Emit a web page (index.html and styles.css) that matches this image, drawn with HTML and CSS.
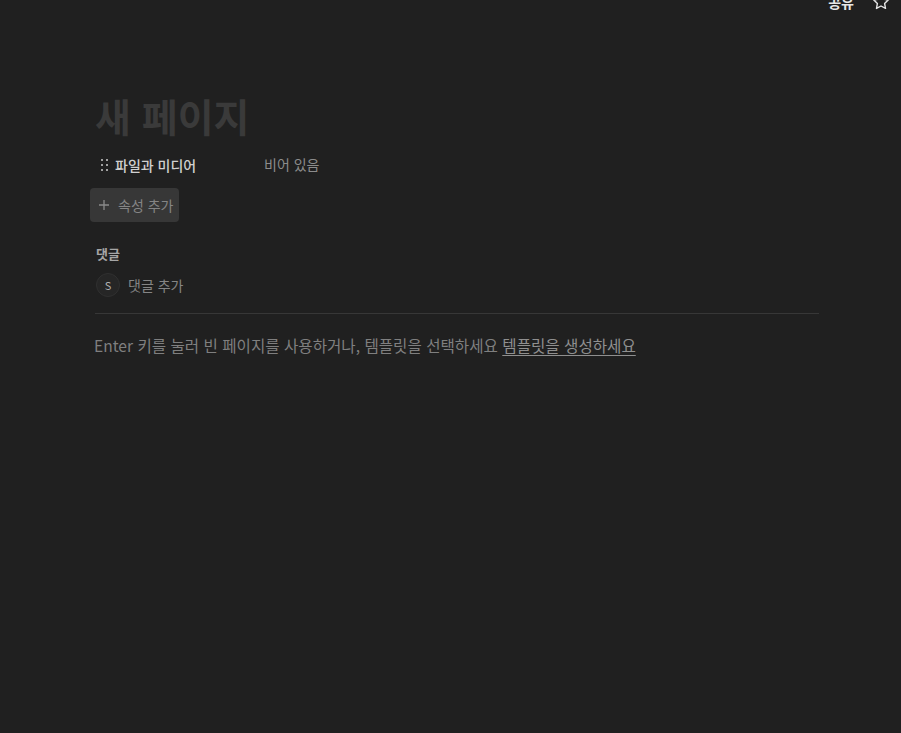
FILE: index.html
```html
<!DOCTYPE html>
<html lang="ko">
	<head>
		<meta charset="UTF-8" />
		<meta name="viewport" content="width=device-width, initial-scale=1.0" />
		<title>새 페이지</title>
		<link rel="stylesheet" href="styles.css">
	</head>
	<body>
		<div class="topbar">
			<span class="share">공유</span>
			<svg class="star" width="18" height="18" viewBox="0 0 18 18">
				<path d="M9 1.6l2.2 4.6 5 .7-3.6 3.5.9 5-4.5-2.4-4.5 2.4.9-5L1.8 6.9l5-.7z" fill="none" stroke="#e6e6e6" stroke-width="1.4" stroke-linejoin="round" />
			</svg>
		</div>

		<div class="page">
			<h1 class="title">새 페이지</h1>

			<div class="property-row">
				<div class="property-name">
					<span class="handle"><i></i><i></i><i></i><i></i><i></i><i></i></span>
					파일과 미디어
				</div>
				<div class="property-value">비어 있음</div>
			</div>

			<button class="add-property">
				<svg class="plus" width="12" height="12" viewBox="0 0 12 12">
					<path d="M6 1v10M1 6h10" stroke="#8a8a8a" stroke-width="1.3" />
				</svg>
				속성 추가
			</button>

			<div class="comments">
				<div class="comments-title">댓글</div>
				<div class="comment-add">
					<span class="avatar">S</span>
					<span>댓글 추가</span>
				</div>
			</div>

			<p class="hint">
				Enter 키를 눌러 빈 페이지를 사용하거나, 템플릿을 선택하세요
				<a href="#">템플릿을 생성하세요</a>
			</p>
		</div>
	</body>
</html>
```

FILE: styles.css
```css
body {
	margin: 0;
	background-color: #202020;
	font-family: 'Noto Sans CJK KR', 'Noto Sans', sans-serif;
	color: #d4d4d4;
	height: 733px;
	overflow: hidden;
}
.topbar {
	display: flex;
	justify-content: flex-end;
	align-items: center;
	gap: 18px;
	height: 20px;
	margin-top: -8px;
	padding-right: 11px;
}
.share {
	font-size: 14px;
	font-weight: 700;
	color: #e6e6e6;
}
.star {
	display: block;
}
.page {
	width: 724px;
	margin: 0 0 0 95px;
	padding-top: 78px;
}
.title {
	margin: 0;
	font-size: 39px;
	font-weight: 700;
	line-height: 1.3;
	color: #3a3a3a;
}
.property-row {
	display: flex;
	align-items: center;
	height: 26px;
	margin-top: 10px;
	font-size: 14px;
}
.property-name {
	display: flex;
	align-items: center;
	gap: 7px;
	width: 163px;
	padding-left: 6px;
	color: #d0d0d0;
	font-weight: 500;
	padding-top: 3px;
}
.handle {
	display: grid;
	grid-template-columns: 2px 2px;
	gap: 3px 3px;
}
.handle i {
	width: 2px;
	height: 2px;
	background: #a0a0a0;
}
.property-value {
	color: #8c8c8c;
}
.add-property {
	display: flex;
	align-items: center;
	gap: 8px;
	margin: 11px 0 0 -5px;
	height: 34px;
	padding: 0 6px 0 8px;
	border: none;
	border-radius: 4px;
	background-color: #373737;
	color: #858585;
	font-family: inherit;
	font-size: 14px;
	cursor: pointer;
}
.plus {
	display: block;
}
.comments {
	margin-top: 22px;
	padding-bottom: 16px;
	border-bottom: 1px solid #373737;
}
.comments-title {
	font-size: 13px;
	font-weight: 700;
	color: #a6a6a6;
	padding-left: 1px;
}
.comment-add {
	display: flex;
	align-items: center;
	gap: 8px;
	margin-top: 10px;
	font-size: 14px;
	color: #858585;
}
.avatar {
	display: flex;
	align-items: center;
	justify-content: center;
	width: 22px;
	height: 22px;
	margin-left: 1px;
	border-radius: 50%;
	background-color: #262626;
	border: 1px solid #303030;
	color: #b0b0b0;
	font-size: 11px;
}
.hint {
	margin: 20px 0 0 -1px;
	font-size: 15.6px;
	color: #7f7f7f;
}
.hint a {
	color: #8f8f8f;
	text-decoration: underline;
	text-underline-offset: 3px;
}
```
